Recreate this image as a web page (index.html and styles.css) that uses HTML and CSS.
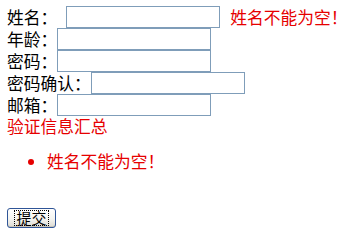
FILE: index.html
```html
<!DOCTYPE html>
<html>
<head>
<meta charset="utf-8">
<link rel="stylesheet" href="styles.css">
</head>
<body>
<form class="form">
  <div class="row"><span class="label">姓名：</span><input class="field field-name" type="text"><span class="err">姓名不能为空！</span></div>
  <div class="row"><span class="label">年龄：</span><input class="field" type="text"></div>
  <div class="row"><span class="label">密码：</span><input class="field" type="password"></div>
  <div class="row"><span class="label">密码确认：</span><input class="field" type="password"></div>
  <div class="row"><span class="label">邮箱：</span><input class="field" type="text"></div>
  <div class="summary">
    <div class="summary-title">验证信息汇总</div>
    <ul class="summary-list">
      <li>姓名不能为空！</li>
    </ul>
  </div>
  <button class="submit" type="button"><span class="focus">提交</span></button>
</form>
</body>
</html>
```
FILE: styles.css
```css
html, body {
  margin: 0;
  padding: 0;
  background: #ffffff;
}
body {
  font-family: "Noto Sans CJK SC", "Liberation Sans", sans-serif;
  font-size: 16.75px;
  color: #000000;
}
.form {
  padding: 6px 0 0 7px;
}
.row {
  display: flex;
  align-items: center;
  height: 22px;
  line-height: 22px;
}
.label {
  white-space: nowrap;
}
.field {
  box-sizing: border-box;
  width: 154px;
  height: 22px;
  margin: 0;
  padding: 0 2px;
  border: 1px solid #7f9db9;
  background: #ffffff;
  font: inherit;
  outline: none;
}
.field-name {
  margin-left: 9px;
}
.err {
  color: #e60000;
  margin-left: 10px;
  white-space: nowrap;
}
.summary {
  color: #e60000;
}
.summary-title {
  line-height: 20px;
  height: 20px;
}
.summary-list {
  margin: 15px 0 37px 0;
  padding-left: 40px;
  line-height: 20px;
}
.summary-list li::marker {
  color: #e60000;
}
.submit {
  box-sizing: border-box;
  width: 49px;
  height: 20px;
  margin: 0;
  padding: 0;
  border: 1px solid #2f5597;
  border-radius: 3px;
  background: linear-gradient(#ffffff, #f4f4f0 55%, #dcdad2);
  box-shadow: inset 0 -1px 0 #c6c3b8;
  font-family: "Noto Sans CJK SC", sans-serif;
  font-size: 15px;
  color: #000000;
  display: flex;
  align-items: center;
  justify-content: center;
}
.focus {
  display: block;
  height: 14px;
  line-height: 14px;
  border: 1px dotted #000000;
  padding: 0 1px;
}
```
